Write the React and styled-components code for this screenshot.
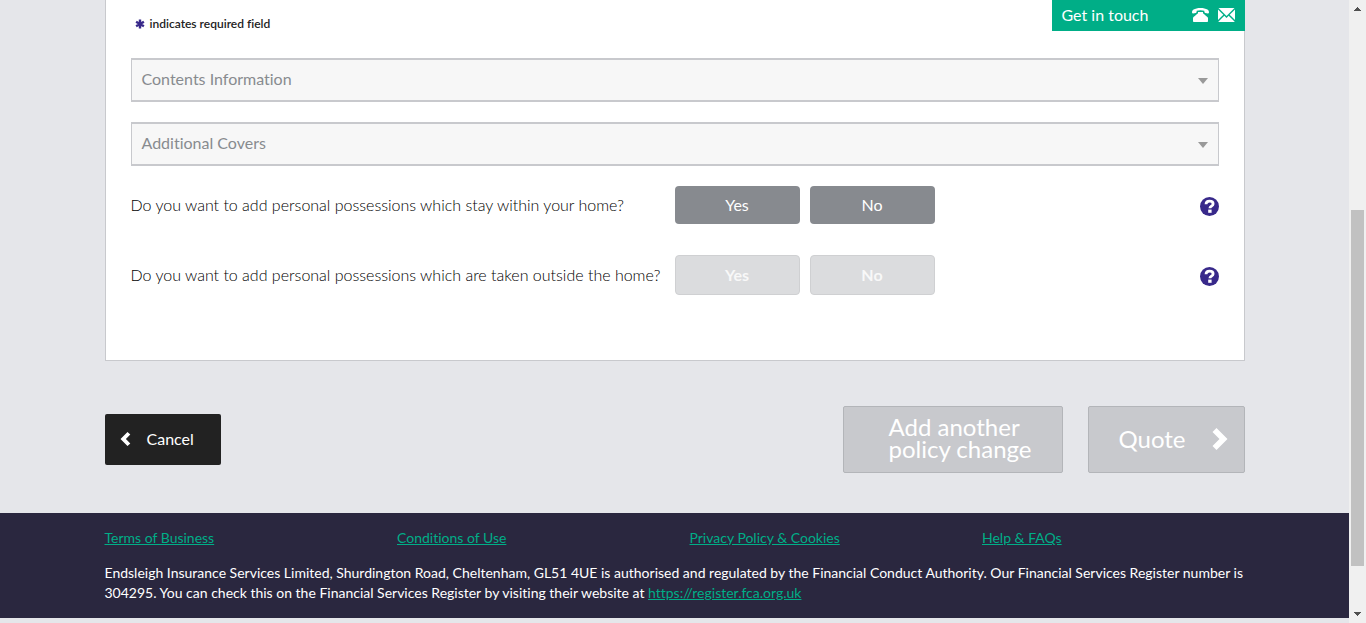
import React from 'react';
import styled, { createGlobalStyle } from 'styled-components';

const GlobalStyle = createGlobalStyle`
  *, *::before, *::after { box-sizing: border-box; }
  body {
    margin: 0;
    background: #e5e6ea;
    color: #222;
    font-family: Lato, "Liberation Sans", sans-serif;
    font-size: 16px;
    line-height: 20px;
    font-variant-ligatures: none;
  }
  button { font: inherit; font-variant-ligatures: none; margin: 0; cursor: pointer; }
  button:disabled { cursor: not-allowed; }
  svg { display: block; flex: none; }
`;

const Page = styled.div`
  display: flex;
  min-height: 100vh;
`;

const Content = styled.div`
  flex: 1;
  min-width: 0;
`;

const Container = styled.div`
  max-width: 1170px;
  margin: 0 auto;
  padding: 0 15px;
`;

const Panel = styled.section`
  position: relative;
  padding: 14px 25px 65px;
  background: #fff;
  border: 1px solid #c8c9cd;
  border-top: 0;
`;

const ContactTab = styled.button`
  position: absolute;
  top: 0;
  right: -1px;
  display: flex;
  align-items: center;
  gap: 9px;
  width: 193px;
  height: 31px;
  padding: 0 10px 1px;
  border: 0;
  background: #00ae87;
  color: #fff;
  text-align: left;
`;

const ContactLabel = styled.span`
  flex: 1;
`;

const Required = styled.p`
  display: flex;
  align-items: center;
  gap: 5px;
  margin: 0 0 24px;
  padding-left: 4px;
  font-size: 12px;
  font-weight: 600;
  color: #222;
`;

const Accordions = styled.div`
  display: grid;
  gap: 20px;
  margin-bottom: 20px;
`;

const AccordionHeader = styled.button`
  display: flex;
  align-items: center;
  justify-content: space-between;
  width: 100%;
  height: 44px;
  padding: 0 10px 2px;
  border: solid #c8c9cd;
  border-width: 2px 1px;
  background: #f7f7f7;
  color: #888b8f;
  text-align: left;
`;

const Caret = styled.span`
  width: 0;
  height: 0;
  margin-top: 4px;
  border: solid transparent;
  border-width: 6px 5px 0;
  border-top-color: #999;
`;

const Questions = styled.div`
  display: grid;
  gap: 31px;
`;

const Question = styled.div`
  display: grid;
  grid-template-columns: 1fr 1fr;
  align-items: center;
`;

const QuestionText = styled.span`
  white-space: nowrap;
  font-weight: 300;
  color: #000;
`;

const Answers = styled.div`
  display: flex;
  align-items: center;
  gap: 10px;
`;

const Choice = styled.button`
  width: 125px;
  height: 38px;
  padding: 0;
  border: 0;
  border-radius: 4px;
  background: #878a8f;
  color: #fff;

  &:disabled {
    height: 40px;
    border: 1px solid #cfd0d2;
    background: #dbdcde;
    color: #f8f8f8;
    font-weight: 700;
  }
`;

const HelpButton = styled.button`
  margin-left: auto;
  padding: 3px 0 0;
  border: 0;
  background: none;
  color: #38298a;
`;

const Actions = styled.div`
  display: flex;
  align-items: center;
  gap: 25px;
  padding: 45px 0 40px;
`;

const CancelButton = styled.button`
  display: flex;
  align-items: center;
  gap: 16px;
  width: 116px;
  height: 51px;
  margin-right: auto;
  padding: 0 15px 1px;
  border: 0;
  border-radius: 2px;
  background: #222;
  color: #fff;
`;

const ActionButton = styled.button`
  display: flex;
  align-items: center;
  justify-content: space-between;
  width: ${(p) => (p.$wide ? 220 : 157)}px;
  height: 67px;
  padding: ${(p) => (p.$wide ? '0 30px 3px 45px' : '0 16px 1px 30px')};
  border: 1px solid #b3b5b9;
  border-radius: 2px;
  background: #c8c9cd;
  color: #fff;
  font-size: 24px;
  line-height: 22px;
  text-align: left;
`;

const Footer = styled.footer`
  padding: 15px 0;
  background: #2a273f;
  color: #fff;
  font-size: 14px;
`;

const FooterLinks = styled.nav`
  display: grid;
  grid-template-columns: repeat(4, 1fr);
  margin: 0 -30px 15px 0;
`;

const FooterLink = styled.a`
  justify-self: start;
  color: #00ae87;
  text-decoration: underline;
`;

const Legal = styled.p`
  margin: 0;
`;

const ScrollTrack = styled.div`
  position: sticky;
  top: 0;
  display: flex;
  flex-direction: column;
  align-items: center;
  width: 17px;
  height: 100vh;
  padding: 7px 0;
  background: #f0f0f0;
`;

const ScrollSpace = styled.div`
  flex: ${(p) => p.$share} 0 0;
`;

const ScrollThumb = styled.div`
  flex: 356 0 0;
  width: 13px;
  background: #c1c1c1;
`;

const PhoneIcon = () => (
  <svg width="17" height="14" viewBox="0 0 17 14" fill="currentColor" aria-hidden="true">
    <path d="M0 4.6C0 3.4.5 2.3 1.600 1.600 3.200.5 5.600 0 8.500 0s5.300.5 6.900 1.600C16.500 2.300 17 3.400 17 4.600c0 .6-.4.900-1 .8l-2.800-.5c-.5-.1-.8-.4-.8-.9l-.1-1.300c-2.400-.7-5.200-.7-7.600 0L4.600 4c0 .5-.3.800-.8.900L1 5.400c-.6.1-1-.2-1-.8Z" />
    <path d="M6 4h5v1.300c.4.500 4.200 3.400 4.800 4.200.2.300.2.500.2.800v2.900c0 .5-.3.800-.8.800H1.800c-.5 0-.8-.3-.8-.8v-2.900c0-.3 0-.5.200-.8C1.800 8.700 5.600 5.800 6 5.300Z" />
  </svg>
);

const MailIcon = () => (
  <svg width="17" height="14" viewBox="0 0 17 14" fill="currentColor" aria-hidden="true">
    <path d="M.5 0h16L8.500 8Z" />
    <path d="M0 1.500 5.300 6.800 0 12Z" />
    <path d="M17 1.500 11.700 6.800 17 12Z" />
    <path d="M6.300 7.800 8.500 10l2.200-2.200L16.500 13.500V14H.5v-.5Z" />
  </svg>
);

const AsteriskIcon = () => (
  <svg width="10" height="10" viewBox="0 0 10 10" stroke="#38298a" strokeWidth="2.4" aria-hidden="true">
    <path d="M5 .5v9M1.100 2.750l7.800 4.500M1.100 7.250l7.800-4.500" />
  </svg>
);

const HelpIcon = () => (
  <svg width="19" height="19" viewBox="0 0 19 19" aria-hidden="true">
    <circle cx="9.500" cy="9.500" r="9.500" fill="currentColor" />
    <path d="M6 7.200C6.100 5 7.400 4.200 9.600 4.200c2.200 0 3.500 1 3.500 2.700 0 2.300-3.200 2.200-3.200 4.400" fill="none" stroke="#fff" strokeWidth="2.800" />
    <path d="M8.200 12.600h3.400v3.200H8.200Z" fill="#fff" />
  </svg>
);

const ChevronLeftIcon = () => (
  <svg width="11" height="14" viewBox="0 0 11 14" fill="currentColor" aria-hidden="true">
    <path d="M.5 7 7.500 0l2.800 2.600L5.900 7l4.400 4.400L7.500 14Z" />
  </svg>
);

const ChevronRightIcon = () => (
  <svg width="16" height="22" viewBox="0 0 16 22" fill="currentColor" aria-hidden="true">
    <path d="M15.500 11 4.500 0 .5 4l7 7-7 7 4 4Z" />
  </svg>
);

const ScrollArrow = ({ down }) => (
  <svg width="7" height="4" viewBox="0 0 7 4" fill="#505050" shapeRendering="crispEdges" aria-hidden="true">
    <path d={down ? 'M0 0h7L3.500 4Z' : 'M0 4h7L3.500 0Z'} />
  </svg>
);

const sections = ['Contents Information', 'Additional Covers'];

const questions = [
  { text: 'Do you want to add personal possessions which stay within your home?', disabled: false },
  { text: 'Do you want to add personal possessions which are taken outside the home?', disabled: true },
];

const links = ['Terms of Business', 'Conditions of Use', 'Privacy Policy & Cookies', 'Help & FAQs'];

export default function App() {
  return (
    <>
      <GlobalStyle />
      <Page>
        <Content>
          <Container as="main">
            <Panel>
              <ContactTab type="button">
                <ContactLabel>Get in touch</ContactLabel>
                <PhoneIcon />
                <MailIcon />
              </ContactTab>
              <Required>
                <AsteriskIcon />
                indicates required field
              </Required>
              <Accordions>
                {sections.map((name) => (
                  <AccordionHeader key={name} type="button" aria-expanded="false">
                    {name}
                    <Caret />
                  </AccordionHeader>
                ))}
              </Accordions>
              <Questions>
                {questions.map((q, i) => (
                  <Question key={q.text} role="group" aria-labelledby={`question-${i}`}>
                    <QuestionText id={`question-${i}`}>{q.text}</QuestionText>
                    <Answers>
                      <Choice type="button" disabled={q.disabled}>Yes</Choice>
                      <Choice type="button" disabled={q.disabled}>No</Choice>
                      <HelpButton type="button" aria-label="Help">
                        <HelpIcon />
                      </HelpButton>
                    </Answers>
                  </Question>
                ))}
              </Questions>
            </Panel>
            <Actions>
              <CancelButton type="button">
                <ChevronLeftIcon />
                Cancel
              </CancelButton>
              <ActionButton type="button" disabled $wide>
                Add another policy change
              </ActionButton>
              <ActionButton type="button" disabled>
                Quote
                <ChevronRightIcon />
              </ActionButton>
            </Actions>
          </Container>
          <Footer>
            <Container>
              <FooterLinks>
                {links.map((name) => (
                  <FooterLink key={name} href="#">{name}</FooterLink>
                ))}
              </FooterLinks>
              <Legal>
                Endsleigh Insurance Services Limited, Shurdington Road, Cheltenham, GL51 4UE is authorised and
                regulated by the Financial Conduct Authority. Our Financial Services Register number is 304295. You
                can check this on the Financial Services Register by visiting their website at{' '}
                <FooterLink href="https://register.fca.org.uk">https://register.fca.org.uk</FooterLink>
              </Legal>
            </Container>
          </Footer>
        </Content>
        <ScrollTrack aria-hidden="true">
          <ScrollArrow />
          <ScrollSpace $share={199} />
          <ScrollThumb />
          <ScrollSpace $share={46} />
          <ScrollArrow down />
        </ScrollTrack>
      </Page>
    </>
  );
}
